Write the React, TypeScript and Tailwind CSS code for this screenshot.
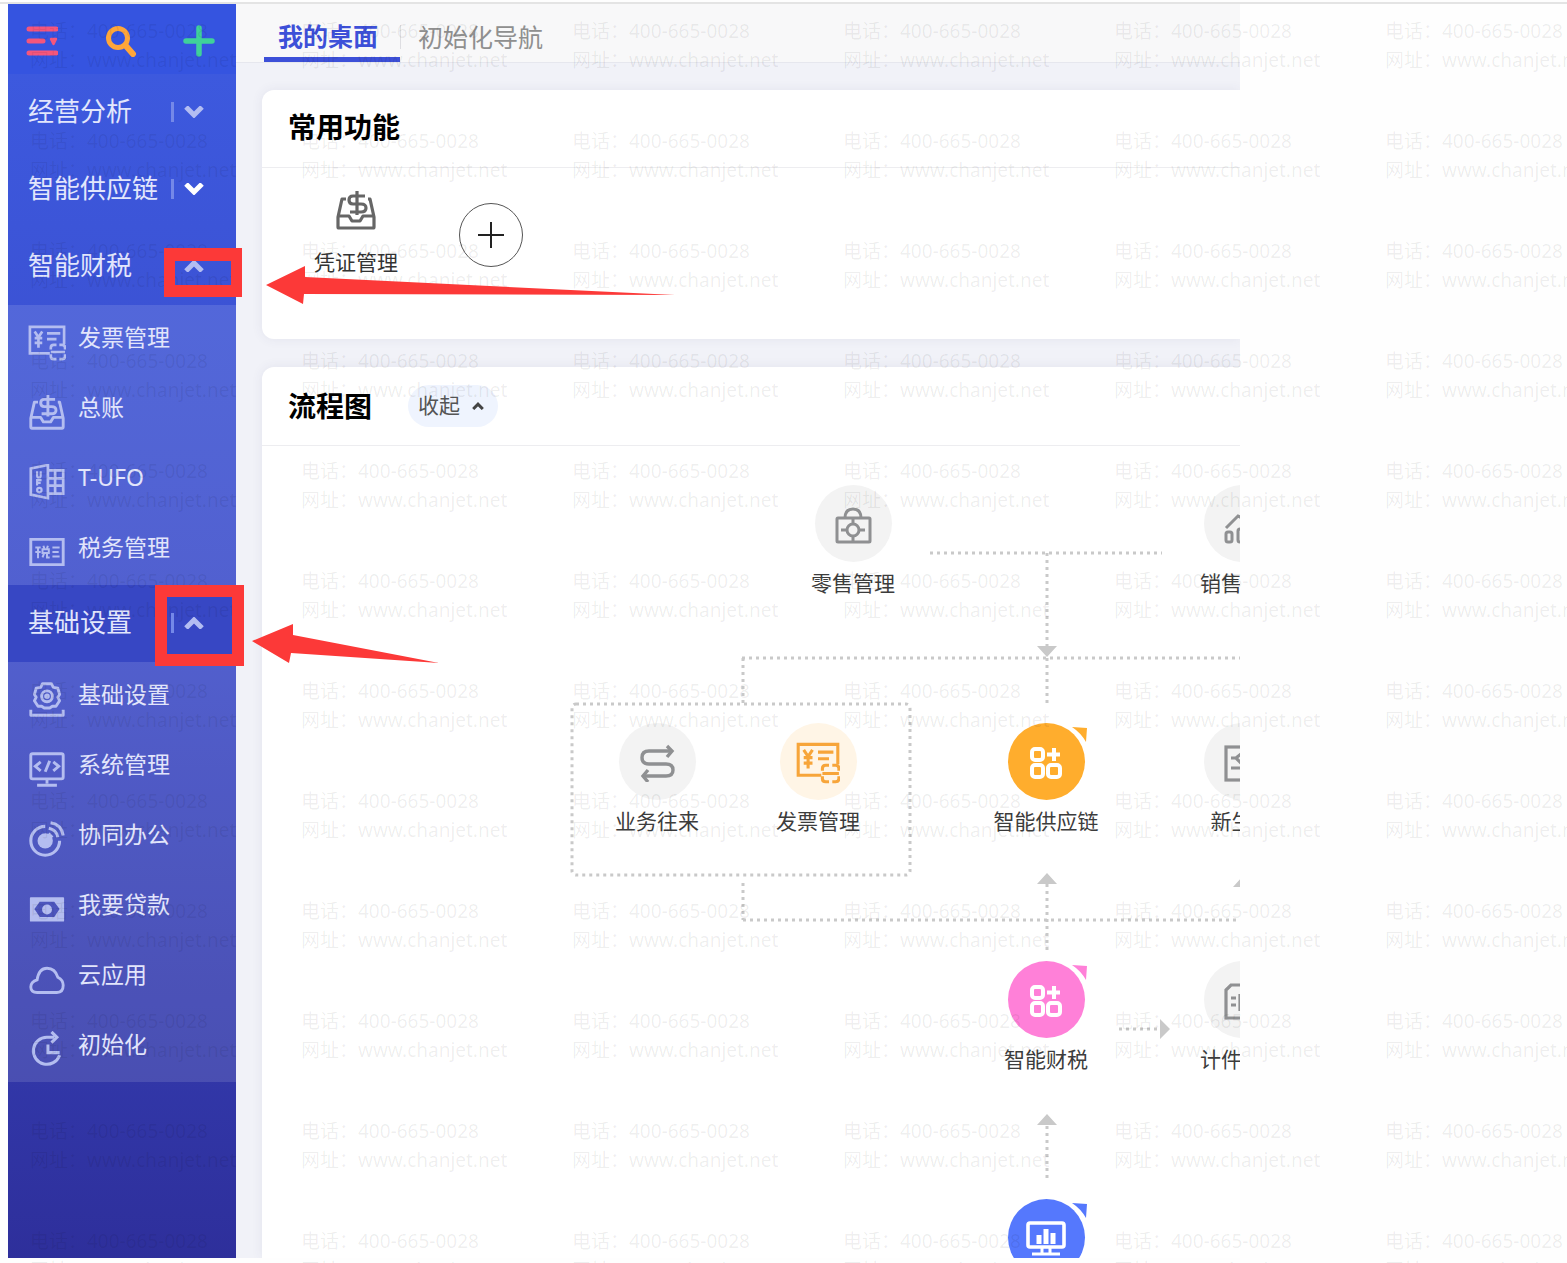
import { ReactNode, useState } from "react";

interface SubItem {
  label: string;
  icon: ReactNode;
}

interface MenuGroup {
  label: string;
  items?: SubItem[];
  divider?: boolean;
  bright?: boolean;
  active?: boolean;
}

interface FlowNode {
  label?: string;
  x: number;
  y: number;
  tone: string;
  flag?: string;
  icon: ReactNode;
}

interface IconProps {
  className?: string;
}

function InvoiceIcon({ className = "size-10" }: IconProps) {
  return (
    <svg className={className} viewBox="0 0 40 40" fill="none" stroke="currentColor" strokeWidth="2.800">
      <path d="M23 32H2V4h36v18" />
      <path d="M7 9l4 6 4-6M11 15v11M7 16h8M7 21h8M20 11h14M20 17h10" />
      <path d="M24 28v-2q0-3 3-3h3M33 23h3q3 0 3 3v2M24 33v2q0 3 3 3h3M33 38h3q3 0 3-3v-2M24 30.500h15" />
    </svg>
  );
}

function LedgerIcon({ className = "size-9" }: IconProps) {
  return (
    <svg className={className} viewBox="0 0 40 40" fill="none" stroke="currentColor" strokeWidth="3.200" strokeLinejoin="round">
      <path d="M10 9H6L2 27v10q0 1 1 1h34q1 0 1-1V27L34 9h-2" />
      <path d="M2 26h11l3 5h8l3-5h11" />
      <path d="M29 6H17q-4 0-4 4t4 4h8q5 0 5 4t-5 4H14M21 1v24" />
    </svg>
  );
}

function UfoIcon() {
  return (
    <svg className="size-9" viewBox="0 0 40 40" fill="none" stroke="currentColor" strokeWidth="3">
      <path d="M2 5l19-4v37L2 34z" />
      <path d="M21 7h17v26H21M21 16h17M21 24h17M29 7v26" />
      <path d="M9 8v5q0 2 2 2t2-2V8M9 24v-6h5M9 21h4" strokeWidth="2.400" />
      <circle cx="11.500" cy="29" r="2.500" strokeWidth="2.400" />
    </svg>
  );
}

function TaxIcon() {
  return (
    <svg className="size-9" viewBox="0 0 40 40" fill="none" stroke="currentColor" strokeWidth="3.200">
      <path d="M2 6h36v28H2z" />
      <path d="M7 15h6M10 14v13M7 20h6M16 13l1 3M21 13l-1 3M15 17h7v4h-7zM17 21l-2 5M20 21v5h3M26 15h8M26 20h7M26 25h8" strokeWidth="2.200" />
    </svg>
  );
}

function GearIcon() {
  return (
    <svg className="size-9" viewBox="0 0 40 40" fill="none" stroke="currentColor" strokeWidth="3.200" strokeLinejoin="round">
      <path d="M15 3h10l2 4 5 1 2 7-2 3 2 4-4 6h-4l-3 2h-6l-3-2h-4l-4-6 2-4-2-3 2-7 5-1z" />
      <circle cx="20" cy="17" r="6" />
      <circle cx="20" cy="17" r="1.500" />
      <path d="M2 32v6h36v-6" />
    </svg>
  );
}

function SystemIcon() {
  return (
    <svg className="size-9" viewBox="0 0 40 40" fill="none" stroke="currentColor" strokeWidth="3.200">
      <rect x="2" y="3" width="36" height="28" rx="2" />
      <path d="M13 12l-6 5 6 5M27 12l6 5-6 5M23 11l-5 12" />
      <path d="M20 30v6M9 38h22" />
    </svg>
  );
}

function CoopIcon() {
  return (
    <svg className="size-9" viewBox="0 0 40 40" fill="none" stroke="currentColor" strokeWidth="3.400">
      <path d="M18 6a16 16 0 1 0 16 16" />
      <circle cx="18" cy="22" r="8.500" fill="currentColor" stroke="none" />
      <path d="M22 18l3-3" strokeWidth="6" />
      <path d="M22 8q9 2 10 10M24 2q12 2 14 14" />
    </svg>
  );
}

function LoanIcon() {
  return (
    <svg className="size-9" viewBox="0 0 40 40" fill="currentColor">
      <path fillRule="evenodd" d="M2 7h36q1 0 1 1v25q0 1-1 1H2q-1 0-1-1V8q0-1 1-1zM12 12l-6 8 6 9h16l6-9-6-8z" />
      <circle cx="20" cy="20.500" r="5.500" />
    </svg>
  );
}

function CloudIcon() {
  return (
    <svg className="size-9" viewBox="0 0 40 40" fill="none" stroke="currentColor" strokeWidth="3.200">
      <path d="M9 35q-7 0-7-6t7-8q2-13 11-13t12 10q6 3 6 9 0 8-7 8z" />
    </svg>
  );
}

function InitIcon() {
  return (
    <svg className="size-9" viewBox="0 0 40 40" fill="none" stroke="currentColor" strokeWidth="3.400">
      <path d="M28 7H20a15 15 0 1 0 14 20" />
      <path d="M25 1l6 6-6 6M21 15v9h13" />
    </svg>
  );
}

function Chevron({ up, className }: { up?: boolean; className: string }) {
  return (
    <svg className={className} viewBox="0 0 20 12" fill="none" stroke="currentColor" strokeWidth="5">
      <path d={up ? "M2 11l8-8 8 8" : "M2 1l8 8 8-8"} />
    </svg>
  );
}

function BagIcon() {
  return (
    <svg className="size-10" viewBox="0 0 40 40" fill="none" stroke="currentColor" strokeWidth="3">
      <rect x="4" y="14" width="33" height="24" rx="1" />
      <path d="M12 14q0-9 8-9t8 9M20 15v5M20 33v5M8 26h6M26 26h6" />
      <circle cx="20" cy="26" r="6" />
    </svg>
  );
}

function SalesIcon() {
  return (
    <svg className="size-10" viewBox="0 0 40 40" fill="none" stroke="currentColor" strokeWidth="3">
      <rect x="4" y="28" width="6" height="10" rx="2" />
      <rect x="16" y="25" width="7" height="13" rx="2" />
      <rect x="29" y="20" width="7" height="18" rx="2" />
      <path d="M4 24l12-12 8 4L36 5" />
    </svg>
  );
}

function RouteIcon() {
  return (
    <svg className="size-10" viewBox="0 0 40 40" fill="none" stroke="currentColor" strokeWidth="3.400">
      <path d="M34 9H12q-7 0-7 6.500t7 6.500h17q7 0 7 6t-7 6H6" />
      <path d="M30 4l5 5-5 6M11 28l-5 6 5 6" />
    </svg>
  );
}

function AppsIcon() {
  return (
    <svg className="size-10" viewBox="0 0 40 40" fill="none" stroke="currentColor" strokeWidth="4">
      <rect x="6" y="7" width="11" height="11" rx="3" />
      <rect x="6" y="23" width="11" height="12" rx="3" />
      <rect x="22" y="23" width="12" height="12" rx="3" />
      <path d="M28 6v13M21 12.500h13" />
    </svg>
  );
}

function NoteIcon() {
  return (
    <svg className="size-10" viewBox="0 0 40 40" fill="none" stroke="currentColor" strokeWidth="3.200">
      <rect x="4" y="5" width="32" height="33" />
      <path d="M9 16h5l5-4M14 16l5 5M9 26h20" />
    </svg>
  );
}

function WageIcon() {
  return (
    <svg className="size-10" viewBox="0 0 40 40" fill="none" stroke="currentColor" strokeWidth="3.200">
      <path d="M4 38V10l5-5h27v33z" />
      <path d="M9 18h5M9 25h5M18 14v17M23 18h8" />
    </svg>
  );
}

function ScreenIcon() {
  return (
    <svg className="size-10" viewBox="0 0 40 40" fill="none" stroke="currentColor" strokeWidth="3.600">
      <rect x="2" y="5" width="36" height="24" rx="2" />
      <path d="M13 17v9M20 11v15M27 15v11" strokeWidth="5" />
      <path d="M16 29v6M24 29v6M6 36h28" strokeWidth="3" />
    </svg>
  );
}

const menu: MenuGroup[] = [
  { label: "经营分析", divider: true },
  { label: "智能供应链", divider: true, bright: true },
  {
    label: "智能财税",
    items: [
      { label: "发票管理", icon: <InvoiceIcon /> },
      { label: "总账", icon: <LedgerIcon /> },
      { label: "T-UFO", icon: <UfoIcon /> },
      { label: "税务管理", icon: <TaxIcon /> },
    ],
  },
  {
    label: "基础设置",
    divider: true,
    active: true,
    items: [
      { label: "基础设置", icon: <GearIcon /> },
      { label: "系统管理", icon: <SystemIcon /> },
      { label: "协同办公", icon: <CoopIcon /> },
      { label: "我要贷款", icon: <LoanIcon /> },
      { label: "云应用", icon: <CloudIcon /> },
      { label: "初始化", icon: <InitIcon /> },
    ],
  },
];

const GRAY = "bg-[#f3f3f3] text-[#8f9092]";

// x / y are the centre of the circle on the canvas
const nodes: FlowNode[] = [
  { label: "零售管理", x: 591, y: 77, tone: GRAY, icon: <BagIcon /> },
  { label: "销售管理", x: 980, y: 77, tone: GRAY, icon: <SalesIcon /> },
  { label: "业务往来", x: 395, y: 315, tone: GRAY, icon: <RouteIcon /> },
  { label: "发票管理", x: 556, y: 315, tone: "bg-[#fff5e6] text-[#f7a53a]", icon: <InvoiceIcon className="size-11" /> },
  { label: "智能供应链", x: 784, y: 315, tone: "bg-[#ffad2d] text-white", flag: "text-[#ffad2d]", icon: <AppsIcon /> },
  { label: "新生意", x: 980, y: 315, tone: GRAY, icon: <NoteIcon /> },
  { label: "智能财税", x: 784, y: 553, tone: "bg-[#ff80d8] text-white", flag: "text-[#ff80d8]", icon: <AppsIcon /> },
  { label: "计件工资", x: 980, y: 553, tone: GRAY, icon: <WageIcon /> },
  { x: 784, y: 791, tone: "bg-[#5578fd] text-white", flag: "text-[#5578fd]", icon: <ScreenIcon /> },
];

function Sidebar() {
  const [open, setOpen] = useState<string[]>(["智能财税", "基础设置"]);

  const toggle = (label: string) => {
    setOpen((prev) =>
      prev.includes(label) ? prev.filter((l) => l !== label) : [...prev, label]
    );
  };

  return (
    <aside className="w-[228px] shrink-0 bg-linear-to-b from-[#3d5be1] via-[#3a4ac8] to-[#2e2f9b]">
      <div className="flex h-[70px] items-center justify-between bg-[#3554e0] pt-1 pr-[21px] pl-[18px]">
        <button aria-label="菜单" className="text-[#f4567c]">
          <svg className="size-8" viewBox="0 0 32 32" fill="none" stroke="currentColor" strokeWidth="5" strokeLinecap="round">
            <path d="M3 4h27M3 16h14M3 28h27" />
            <path d="M25 14h5l-2.500 5z" fill="currentColor" strokeWidth="2.500" strokeLinejoin="round" />
          </svg>
        </button>
        <button aria-label="搜索" className="text-[#ffa63a]">
          <svg className="size-8" viewBox="0 0 32 32" fill="none" stroke="currentColor" strokeWidth="5" strokeLinecap="round">
            <circle cx="13" cy="13" r="9.500" />
            <path d="M21 21l7 8" strokeWidth="6" />
          </svg>
        </button>
        <button aria-label="新增" className="text-[#3fd19a]">
          <svg className="size-8" viewBox="0 0 32 32" stroke="currentColor" strokeWidth="5.500" strokeLinecap="round">
            <path d="M16 3v26M3 16h26" />
          </svg>
        </button>
      </div>
      <nav>
        {menu.map((group) => {
          const isOpen = open.includes(group.label);
          return (
            <div key={group.label}>
              <button
                onClick={() => toggle(group.label)}
                className={`flex h-[77px] w-full items-center justify-between pr-8 pb-[2px] pl-5 text-[26px] text-[#e2e6fc] ${
                  group.active ? "bg-[#3747c4]" : ""
                }`}
              >
                <span>{group.label}</span>
                <span className={`flex items-center gap-[10px] ${group.bright ? "text-white" : "text-[#b3bdf2]"}`}>
                  {group.divider && <span className="h-5 w-[3px] bg-[#7488e8]"></span>}
                  <Chevron up={isOpen} className="h-3 w-5" />
                </span>
              </button>
              {isOpen && group.items && (
                <ul className="bg-white/12">
                  {group.items.map((item) => (
                    <li key={item.label}>
                      <a href="#" className="flex h-[70px] items-center gap-3 pb-[5px] pl-5 text-[23px] text-[#e2e5fb]">
                        <span className="flex w-[38px] justify-center pt-2 text-[#b4bdf0]">{item.icon}</span>
                        {item.label}
                      </a>
                    </li>
                  ))}
                </ul>
              )}
            </div>
          );
        })}
      </nav>
    </aside>
  );
}

function Flow() {
  return (
    <div className="relative h-[812px] overflow-hidden">
      <svg className="absolute inset-0 size-full" fill="none" stroke="#c9c9c9" strokeWidth="3" strokeDasharray="3 4">
        <path d="M668 107H900M785 107V200M480 212H1000M481 212V257M785 212V260" />
        <rect x="310" y="258" width="338" height="171" rx="4" />
        <path d="M481 437V474M481 474H1000M785 438V506M857 583H898M785 680V732" />
        <g fill="#c9c9c9" stroke="none">
          <path d="M775 200h20l-10 11zM775 438h20l-10-11zM971 441h20l-10-11zM775 679h20l-10-11zM898 573v20l10-10z" />
        </g>
      </svg>
      {nodes.map((node) => (
        <div
          key={node.y + "-" + node.x}
          className="absolute flex w-40 -translate-x-1/2 flex-col items-center"
          style={{ left: node.x, top: node.y - 38 }}
        >
          <div className={`relative flex size-[77px] items-center justify-center rounded-full ${node.tone}`}>
            {node.icon}
            {node.flag && (
              <svg className={`absolute top-1 -right-[2px] size-4 ${node.flag}`} viewBox="0 0 16 16" fill="currentColor">
                <path d="M1 0l15 1-1 14q-5-9-14-15z" />
              </svg>
            )}
          </div>
          {node.label && (
            <span className="mt-[7px] text-[21px] leading-7 whitespace-nowrap text-[#3c3c3c]">{node.label}</span>
          )}
        </div>
      ))}
    </div>
  );
}

function Desktop() {
  const [tab, setTab] = useState("我的桌面");
  const tabs = ["我的桌面", "初始化导航"];

  return (
    <main className="min-w-0 flex-1 overflow-hidden bg-[#f1f2f8]">
      <div className="flex h-[59px] border-b border-[#e6e7ee] bg-[#f8f8f9] pl-7">
        {tabs.map((t, i) => (
          <div key={t} className="flex shrink-0">
            {i > 0 && <span className="mt-2 h-6 w-px self-center bg-[#dedee2]"></span>}
            <button
              onClick={() => setTab(t)}
              className={`text-[25px] whitespace-nowrap ${
                tab === t
                  ? "border-b-5 border-[#3d50d8] pt-3 pr-[22px] pl-[14px] font-bold text-[#3d50d8]"
                  : "px-[17px] pt-[10px] text-[#8f8f8f]"
              }`}
            >
              {t}
            </button>
          </div>
        ))}
      </div>

      <div className="flex flex-col gap-7 pt-[27px] pl-[26px]">
        <section className="h-[249px] rounded-l-xl bg-white shadow-[0_0_12px_rgba(60,70,120,0.08)]">
          <h2 className="h-[78px] border-b border-[#ededf0] pt-4 pl-[26px] text-[28px] font-bold text-black">
            常用功能
          </h2>
          <div className="flex items-center gap-[61px] pt-[22px] pl-[52px]">
            <a href="#" className="flex flex-col items-center gap-[14px] text-[21px] leading-9 text-[#333]">
              <LedgerIcon className="size-10 text-[#666]" />
              凭证管理
            </a>
            <button aria-label="添加" className="flex size-16 items-center justify-center rounded-full border border-[#555]">
              <svg className="size-7" viewBox="0 0 28 28" stroke="#222" strokeWidth="2">
                <path d="M14 1v26M1 14h26" />
              </svg>
            </button>
          </div>
        </section>

        <section className="rounded-tl-xl bg-white shadow-[0_0_12px_rgba(60,70,120,0.08)]">
          <div className="flex h-[79px] items-center gap-9 border-b border-[#ededf0] pl-[26px]">
            <h2 className="text-[28px] font-bold text-black">流程图</h2>
            <button className="flex h-[42px] items-center gap-3 rounded-full bg-[#eff4fe] pr-[14px] pl-[10px] text-[21px] text-[#555]">
              收起
              <Chevron up className="h-2 w-3 text-[#444]" />
            </button>
          </div>
          <Flow />
        </section>
      </div>
    </main>
  );
}

function Marks() {
  return (
    <svg className="pointer-events-none absolute inset-0 size-full" fill="#fc3938">
      <path fillRule="evenodd" d="M164 248h78v49h-78zM175 261v24h56v-24z" />
      <path fillRule="evenodd" d="M155 585h89v81h-89zM167 597v57h65v-57z" />
      <path d="M266 285l39-19v11l370 18-371-1-1 10z" />
      <path d="M252 641l41-17v11l146 28-148-10-2 10z" />
    </svg>
  );
}

function Watermark() {
  return (
    <div
      aria-hidden="true"
      className="pointer-events-none absolute inset-0 grid auto-rows-[110px] grid-cols-[repeat(6,271px)] overflow-hidden pt-[17px] pl-[30px] text-[19px] leading-[29px] whitespace-nowrap text-black/7"
    >
      {Array.from({ length: 72 }, (_, i) => (
        <div key={i}>
          <p>电话：400-665-0028</p>
          <p>网址：www.chanjet.net</p>
        </div>
      ))}
    </div>
  );
}

export default function App() {
  return (
    <div className="relative min-h-screen overflow-hidden bg-[#fefefe] font-['Noto_Sans','Noto_Sans_CJK_SC',sans-serif]">
      <div className="mt-[2px] border-t-2 border-[#e4e4e4] pr-[327px] pb-[5px] pl-2">
        <div className="flex">
          <Sidebar />
          <Desktop />
        </div>
      </div>
      <Watermark />
      <Marks />
    </div>
  );
}
